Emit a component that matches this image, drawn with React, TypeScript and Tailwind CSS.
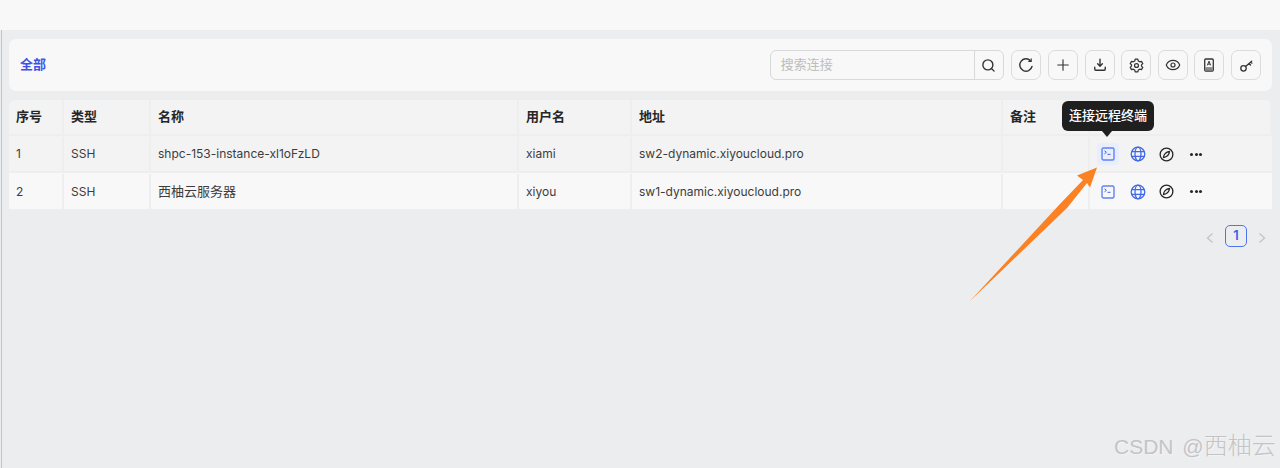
import { Search, Plus, Eye } from "lucide-react";

const rows = [
  { id: "1", type: "SSH", name: "shpc-153-instance-xl1oFzLD", user: "xiami", addr: "sw2-dynamic.xiyoucloud.pro", bg: "bg-[#f3f3f4] border-b-2" },
  { id: "2", type: "SSH", name: "西柚云服务器", user: "xiyou", addr: "sw1-dynamic.xiyoucloud.pro", bg: "bg-[#f8f8f8] border-b" },
];

const cols = "grid grid-cols-[55px_87px_368px_113px_371px_87px_182px]";
const cell = "flex items-center pl-[7px] border-r-2 border-[#eeeeef] text-[#3c3c3c]";

function RefreshIcon() {
  return (
    <svg width="16" height="16" viewBox="0 0 16 16" fill="none" stroke="#333" strokeWidth="1.400" strokeLinecap="round" strokeLinejoin="round">
      <path d="M14 9.500A6.200 6.200 0 1 1 12.500 3.700" />
      <path d="M13.200 1.800v2.600h-2.400" strokeWidth="1.100" />
    </svg>
  );
}

function DownloadIcon() {
  return (
    <svg width="14" height="14" viewBox="0 0 16 16" fill="none" stroke="#333" strokeWidth="1.600" strokeLinecap="round" strokeLinejoin="round">
      <path d="M8 1.500v7.500M5.300 6.600 8 9.300l2.700-2.700" />
      <path d="M2 10.500v2.200c0 .7.500 1.300 1.200 1.300h9.600c.7 0 1.200-.6 1.200-1.300v-2.200" />
    </svg>
  );
}

function GearIcon() {
  return (
    <svg width="15" height="15" viewBox="0 0 16 16" fill="none" stroke="#333" strokeWidth="1.300" strokeLinejoin="round">
      <path d="M6.600 1.300h2.800l.5 1.900 1.500.9 1.900-.5 1.400 2.400-1.400 1.400v1.200l1.400 1.400-1.400 2.400-1.900-.5-1.500.9-.5 1.900H6.600l-.5-1.900-1.500-.9-1.900.5-1.400-2.400 1.400-1.400V7.400L1.300 6l1.400-2.400 1.900.5 1.500-.9z" />
      <circle cx="8" cy="8" r="2.100" />
    </svg>
  );
}

function BookIcon() {
  return (
    <svg width="12" height="14" viewBox="0 0 14 16" fill="none">
      <rect x="2" y="1" width="10" height="14" rx="1.200" stroke="#333" strokeWidth="1.500" />
      <rect x="2.500" y="10.500" width="9" height="4" fill="#8a8a8a" />
      <path d="M5 8.500 7 3.500l2 5M5.800 7h2.400" stroke="#333" strokeWidth="1.100" />
    </svg>
  );
}

function KeyIcon() {
  return (
    <svg width="15" height="15" viewBox="0 0 16 16" fill="none" stroke="#333" strokeWidth="1.400" strokeLinecap="round">
      <circle cx="4.800" cy="11" r="2.900" />
      <path d="M7 9 13.500 3.500M10.500 6l1.800 1.500M12.500 4.300l1.300 1.200" />
    </svg>
  );
}

function TerminalIcon() {
  return (
    <svg width="14" height="14" viewBox="0 0 14 14" fill="none" stroke="#5f83f3">
      <rect x="1" y="1" width="12" height="12" rx="1.500" strokeWidth="1.400" />
      <path d="M3.500 3.800 5.400 5.300 3.500 6.800M6.500 7.300h3" stroke="#3f5ee8" strokeWidth="1" />
    </svg>
  );
}

function GlobeIcon() {
  return (
    <svg width="16" height="16" viewBox="0 0 16 16" fill="none" stroke="#4169e8" strokeWidth="1.300">
      <circle cx="8" cy="8" r="6.800" />
      <ellipse cx="8" cy="8" rx="3" ry="6.800" />
      <path d="M1.500 5.700h13M1.500 10.300h13" />
    </svg>
  );
}

function CompassIcon() {
  return (
    <svg width="15" height="15" viewBox="0 0 16 16" fill="none" stroke="#262626" strokeWidth="1.400" strokeLinejoin="round">
      <circle cx="8" cy="8" r="6.800" />
      <path d="M11.300 4.700C11 7.500 9 10.500 4.700 11.300 5 8.500 7 5.500 11.300 4.700z" strokeWidth="1.200" />
    </svg>
  );
}

function Actions({ hover }: { hover?: boolean }) {
  return (
    <div className="flex items-center h-full">
      <span className={`ml-[7px] w-[22px] h-[22px] flex items-center justify-center rounded-[3px] ${hover ? "bg-[#e9eefc]" : ""}`}>
        <TerminalIcon />
      </span>
      <span className="ml-[11px] w-[16px] flex justify-center">
        <GlobeIcon />
      </span>
      <span className="ml-[13px] w-[15px] flex justify-center">
        <CompassIcon />
      </span>
      <span className="ml-[16px] flex gap-[1.500px]">
        <i className="w-[3px] h-[3px] rounded-full bg-[#262626]" />
        <i className="w-[3px] h-[3px] rounded-full bg-[#262626]" />
        <i className="w-[3px] h-[3px] rounded-full bg-[#262626]" />
      </span>
    </div>
  );
}

const toolBtn = "w-[30px] h-[30px] flex items-center justify-center rounded-[7px] border border-[#dcdcde] text-[#333]";

export default function App() {
  return (
    <div className="relative w-[1280px] h-[468px] overflow-hidden bg-[#ecedef] text-[13px] font-['Inter','Noto_Sans_CJK_SC',sans-serif]">
      <div className="h-[30px] bg-[#f8f8f8]" />
      <div className="h-[438px] ml-[1px] border-l border-[#c4c4c6] pl-[7px] pr-[8px] pt-[9px]">
        {/* toolbar */}
        <div className="h-[52px] rounded-[7px] bg-[#f8f8f8] flex items-center pl-[11px] pr-[11px]">
          <span className="font-semibold text-[#3f51e8]">全部</span>
          <div className="ml-auto flex items-center gap-[6.600px]">
            <div className="flex h-[30px] w-[234px] mr-[1px] rounded-[6px] border border-[#d9d9db]">
              <span className="flex-1 pl-[10px] flex items-center text-[#bdbdbd]">搜索连接</span>
              <span className="w-[29px] border-l border-[#d9d9db] flex items-center justify-center">
                <Search size={15} strokeWidth={2.200} color="#333" />
              </span>
            </div>
            <span className={toolBtn}><RefreshIcon /></span>
            <span className={toolBtn}><Plus size={18} strokeWidth={1.500} /></span>
            <span className={toolBtn}><DownloadIcon /></span>
            <span className={toolBtn}><GearIcon /></span>
            <span className={toolBtn}><Eye size={16} strokeWidth={1.800} /></span>
            <span className={toolBtn}><BookIcon /></span>
            <span className={toolBtn}><KeyIcon /></span>
          </div>
        </div>

        {/* table */}
        <div className="mt-[9px] rounded-t-[7px] overflow-hidden w-[1263px]">
          <div className={`${cols} h-[36px] bg-[#f3f3f4] border-b-2 border-[#eeeeef] font-semibold`}>
            {["序号", "类型", "名称", "用户名", "地址", "备注", ""].map((h) => (
              <div key={h} className={`${cell} !text-[#262626]`}>{h}</div>
            ))}
          </div>
          {rows.map((r, i) => (
            <div key={r.id} className={`${cols} h-[37px] pt-[1px] ${r.bg} border-[#eeeeef] text-xs`}>
              <div className={cell}>{r.id}</div>
              <div className={cell}>{r.type}</div>
              <div className={`${cell} ${i === 1 ? "text-[13px]" : ""}`}>{r.name}</div>
              <div className={cell}>{r.user}</div>
              <div className={cell}>{r.addr}</div>
              <div className={cell} />
              <div><Actions hover={i === 0} /></div>
            </div>
          ))}
        </div>

        {/* pagination */}
        <div className="mt-[15px] w-[1263px] flex items-center justify-end gap-[10px] pr-[5px] text-[#c4c4c6]">
          <svg className="mt-[4px]" width="10" height="12" viewBox="0 0 10 12" fill="none" stroke="currentColor" strokeWidth="1.300"><path d="M7.500 1.500 2.500 6l5 4.500" /></svg>
          <span className="w-[22px] h-[22px] rounded-[5px] border border-[#4f74f0] flex items-center justify-center font-semibold text-[#3f5ee8]">1</span>
          <svg className="mt-[4px]" width="10" height="12" viewBox="0 0 10 12" fill="none" stroke="currentColor" strokeWidth="1.300"><path d="M2.500 1.500 7.500 6l-5 4.500" /></svg>
        </div>
      </div>

      {/* tooltip */}
      <div className="absolute left-[1062px] top-[101px] w-[92px] h-[30px] rounded-[6px] bg-[#1f1f1f] text-white font-medium flex items-center justify-center">
        连接远程终端
        <span className="absolute left-[40px] top-[30px] w-0 h-0 border-x-[5px] border-x-transparent border-t-[6px] border-t-[#1f1f1f]" />
      </div>

      {/* annotation arrow */}
      <svg className="absolute left-0 top-0 pointer-events-none" width="1280" height="468" viewBox="0 0 1280 468">
        <path d="M970 301 1059 205 1083 180 1077 175.500 1097 167.500 1090 187.500 1087 183 1067 208 Z" fill="#fb8122" />
      </svg>

      {/* watermark */}
      <div className="absolute left-[1114px] top-[431px] text-[21px] leading-[30px] text-[#c4c4c6] font-light [word-spacing:3px] [text-shadow:1px_1px_1px_#f4f4f5] font-['Liberation_Sans','Noto_Sans_CJK_SC',sans-serif] whitespace-nowrap">
        CSDN @<span className="text-[24px]">西柚云</span>
      </div>
    </div>
  );
}
